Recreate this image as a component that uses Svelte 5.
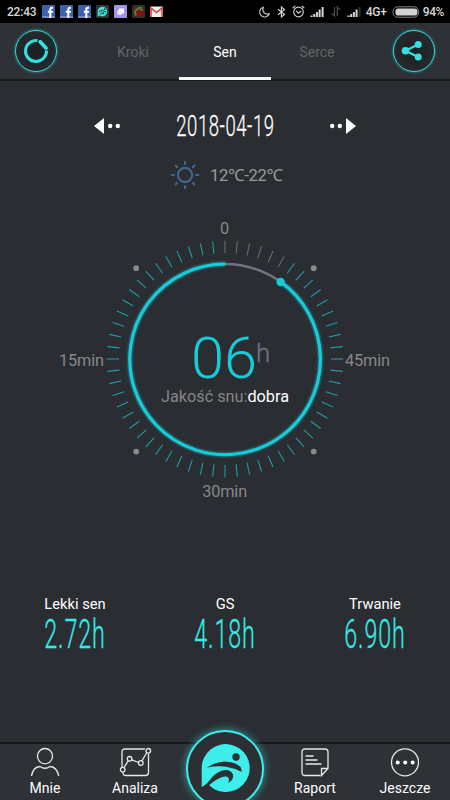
<script>
  const ticks = Array.from({ length: 60 }, (_, i) => i * 6);
  const stats = [
    { label: 'Lekki sen', value: '2.72h' },
    { label: 'GS', value: '4.18h' },
    { label: 'Trwanie', value: '6.90h' }
  ];
  const rays = [0, 45, 90, 135, 180, 225, 270, 315];
</script>

{#snippet fb()}
  <svg width="13" height="13" viewBox="0 0 13 13">
    <rect width="13" height="13" rx="1" fill="#3e5fa9" />
    <rect y="11" width="13" height="2" fill="#7189c4" />
    <path d="M11 2.8H9.8Q8.3 2.8 8.3 4.4V13M5.8 6.7H11" fill="none" stroke="#fff" stroke-width="2" />
  </svg>
{/snippet}

{#snippet signal(last)}
  <svg width="15" height="11" viewBox="0 0 15 11">
    <path d="M1.5 11V9.5M4.2 11V8M6.9 11V6M9.6 11V3.5" stroke="#d5d5d5" stroke-width="2" />
    <path d="M12.6 11V1" stroke={last} stroke-width="2" />
  </svg>
{/snippet}

<main>
  <div class="status">
    <span class="time">22:43</span>
    <div class="notifs">
      {@render fb()}
      {@render fb()}
      {@render fb()}
      <svg width="13" height="13" viewBox="0 0 13 13">
        <rect width="13" height="13" rx="1.5" fill="#343638" />
        <path d="M1.7 11.5V6.5A4.8 4.8 0 1 1 4.3 10.8Z" fill="#3fe3dc" />
        <path d="M3 6.5Q6 4 10.3 7M3.5 10Q5 7.5 8 7.8L7.3 9.2" stroke="#263436" fill="none" />
        <circle cx="8.7" cy="4.2" r=".9" fill="#263436" />
      </svg>
      <svg width="13" height="13" viewBox="0 0 13 13">
        <rect width="13" height="13" rx="1" fill="#a493e6" />
        <rect x="5" y="3.5" width="5" height="5" fill="#fff" />
        <rect x="3.3" y="5.3" width="4.5" height="4.5" fill="#eee9ff" />
      </svg>
      <svg width="13" height="13" viewBox="0 0 13 13">
        <rect width="13" height="13" rx="1.5" fill="#2a342b" />
        <circle cx="6.5" cy="6.5" r="5.3" fill="#8d1018" />
        <path d="M4.2 10.5Q1.8 7 4.8 4.4T10 2.8" fill="none" stroke="#2f9a42" stroke-width="1.7" />
        <path d="M8 4.5L11 5" stroke="#2f9a42" stroke-width="1.4" />
      </svg>
      <svg width="13" height="13" viewBox="0 0 13 13">
        <rect y="1.5" width="13" height="10.5" rx="1" fill="#f1eeee" />
        <path d="M1 12V3L6.5 7.5L12 3V12" fill="none" stroke="#d9463d" stroke-width="1.6" />
      </svg>
    </div>
    <div class="sys">
      <svg class="moon" width="11" height="12" viewBox="0 0 11 12">
        <path d="M4.3 1.2A5 5 0 1 0 10.3 7.8A4.8 4.8 0 0 1 4.3 1.2Z" fill="none" stroke="#ccc" stroke-width="1.1" />
      </svg>
      <svg class="bt" width="9" height="12" viewBox="0 0 9 12">
        <path d="M1 3.2L7.5 8.5L4.4 11V1L7.5 3.5L1 8.8" fill="none" stroke="#ccc" stroke-width="1.2" />
      </svg>
      <svg class="alarm" width="13" height="13" viewBox="0 0 13 13">
        <circle cx="6.5" cy="7" r="4.8" fill="none" stroke="#ccc" stroke-width="1.2" />
        <path d="M4.2 6L6.5 8.2L9 6M.7 3.2L3.2 1M12.3 3.2L9.8 1" fill="none" stroke="#ccc" stroke-width="1.2" />
      </svg>
      <span class="sig1">{@render signal('#d5d5d5')}</span>
      <svg class="data" width="10" height="11" viewBox="0 0 10 11">
        <path d="M1 7.5L3.5 10V1M6.3 10V1L9 3.7" fill="none" stroke="#4a4a4a" stroke-width="1.3" />
      </svg>
      <span class="sig2">{@render signal('#333')}</span>
      <span class="net">4G+</span>
      <svg class="battery" width="28" height="12" viewBox="0 0 28 12">
        <rect x="1" y=".8" width="25.5" height="10.4" rx="4.5" fill="none" stroke="#888" />
        <rect x="3.4" y="2.5" width="22" height="7" rx="2.8" fill="#d2d2d2" />
      </svg>
      <span class="pct">94%</span>
    </div>
  </div>

  <header>
    <div class="round">
      <svg width="42" height="42" viewBox="0 0 42 42">
        <path d="M22.4 10.6A10.5 10.5 0 1 0 31.5 20.5" fill="none" stroke="#32e1df" stroke-width="3" />
        <path d="M25.2 11.8L31 18" stroke="#32e1df" stroke-width="3.8" stroke-linecap="round" />
      </svg>
    </div>
    <nav>
      <span>Kroki</span>
      <span class="active">Sen</span>
      <span>Serce</span>
    </nav>
    <div class="round">
      <svg width="42" height="42" viewBox="0 0 42 42">
        <path d="M25.2 14.5L12.4 20.8L25.2 27" fill="none" stroke="#32e1df" stroke-width="2.2" />
        <g fill="#32e1df">
          <circle cx="12.5" cy="20.7" r="3.8" />
          <circle cx="25.2" cy="14.5" r="3.5" />
          <circle cx="25.2" cy="27" r="3.5" />
        </g>
      </svg>
    </div>
  </header>

  <section class="date">
    <svg width="26" height="18" viewBox="0 0 26 18" fill="#fff">
      <path d="M0 9L10 1V17Z" /><circle cx="16.2" cy="9" r="2.2" /><circle cx="23.8" cy="9" r="2.2" />
    </svg>
    <svg class="digits" width="100" height="28" viewBox="0 0 100 28">
      <text transform="translate(50.4 24.3) scale(.617 1)" font-size="30" letter-spacing=".9" text-anchor="middle" fill="#fff" stroke="#fff">2018-04-19</text>
    </svg>
    <svg width="26" height="18" viewBox="0 0 26 18" fill="#fff">
      <path d="M26 9L16 1V17Z" /><circle cx="9.8" cy="9" r="2.2" /><circle cx="2.2" cy="9" r="2.2" />
    </svg>
  </section>

  <section class="weather">
    <svg width="30" height="30" viewBox="-15 -15 30 30" fill="none" stroke="#40658f" stroke-width="2.1" stroke-linecap="round">
      <circle r="7.1" />
      {#each rays as a}
        <path d="M0 -11V-13.3" transform="rotate({a})" />
      {/each}
    </svg>
    <span>12℃-22℃</span>
  </section>

  <section class="dial">
    <svg width="350" height="290" viewBox="50 215 350 290">
      <g transform="translate(225 359)">
        {#each ticks as a}
          <path d="M0 -106V-118.3" transform="rotate({a})" stroke={a < 36 ? '#686c70' : '#209ca6'} stroke-width="1.1" />
        {/each}
      </g>
      <circle cx="225" cy="359.3" r="95.3" fill="none" stroke="#70767e" stroke-width="2.4" />
      <path class="arc" d="M280.6 281.8A95.3 95.3 0 1 1 225 264" fill="none" stroke="#18cbd9" stroke-width="3" />
      <circle cx="280.6" cy="282" r="4.2" fill="#18cbd9" />
      <g fill="#8b8b8c">
        <circle cx="136.2" cy="268.2" r="2.9" />
        <circle cx="313.7" cy="268.2" r="2.9" />
        <circle cx="136.2" cy="451.6" r="2.9" />
        <circle cx="313.7" cy="451.6" r="2.9" />
      </g>
      <g fill="#878889" font-size="16.3" text-anchor="middle">
        <text x="224.5" y="234">0</text>
        <text x="81.5" y="366" textLength="45">15min</text>
        <text x="367.5" y="366" textLength="45">45min</text>
        <text x="224.7" y="497" textLength="45">30min</text>
      </g>
      <text class="hours" x="191" y="377.5" font-size="57" textLength="66" lengthAdjust="spacingAndGlyphs" fill="#18cbd9">06</text>
      <text x="256" y="362" font-size="26" font-weight="300" fill="#6f7479" stroke="#6f7479" stroke-width=".4">h</text>
      <text x="161" y="401.5" font-size="16.3" textLength="128" fill="#858687">Jakość snu:<tspan fill="#fff">dobra</tspan></text>
    </svg>
  </section>

  <section class="stats">
    {#each stats as s}
      <div class="stat">
        <span>{s.label}</span>
        <svg class="digits" width="76" height="38" viewBox="0 0 76 38">
          <text transform="translate(38 33.3) scale(.575 1)" font-size="40.5" letter-spacing="1.5" text-anchor="middle" fill="#38ebe6" stroke="#38ebe6">{s.value}</text>
        </svg>
      </div>
    {/each}
  </section>

  <footer>
    <div class="item">
      <svg width="30" height="30" viewBox="0 0 30 30">
        <ellipse cx="15" cy="9.2" rx="7.5" ry="7.7" />
        <path d="M1.5 29Q3 20 10 19.5Q15 23 20 19.5Q27 20 28.7 29" />
      </svg>
      <span>Mnie</span>
    </div>
    <div class="item">
      <svg width="32" height="30" viewBox="0 0 32 30">
        <path d="M26 2H6Q3 2 3 5V20M4 25.5Q3.8 28.5 7 28.5H26.5Q29.5 28.5 29.5 25.5V7M4.8 20.8L9.3 13.8M12.7 12.8L19.5 15.5M22.7 14.2L27.6 6" />
        <circle cx="3.7" cy="22.7" r="2.3" /><circle cx="10.6" cy="11.8" r="2.3" />
        <circle cx="21.8" cy="16" r="2.3" /><circle cx="29.3" cy="3.8" r="2.3" />
      </svg>
      <span>Analiza</span>
    </div>
    <div class="item center">
      <div class="hub">
        <svg width="78" height="78" viewBox="0 0 78 78">
          <path d="M15.7 57V37.5A24 24 0 1 1 28.8 59.5Q25.5 57.8 22.8 54.5L15.7 57Z" fill="#3eeeea" />
          <circle cx="50" cy="27" r="3.7" fill="#2c2f33" />
          <path d="M20.5 37.8Q30 31.6 39 31.5Q49 31.5 55 37.5L55.8 42Q49 38.3 40 36.8Q31 35.5 20.5 37.8Z" fill="#2c2f33" />
          <path d="M15.7 57.5Q22 53.5 25.5 48Q32 40.3 40 40Q47 40.5 47.2 46.5Q46.5 51 41.8 53Q43.5 50.5 42.7 48Q40.5 45.5 35.5 47.3Q29.5 49.5 23 55L18 60Z" fill="#2c2f33" />
        </svg>
      </div>
    </div>
    <div class="item">
      <svg width="30" height="30" viewBox="0 0 30 30">
        <path d="M20.5 28.5H5Q2 28.5 2 25.5V5Q2 2 5 2H25Q28 2 28 5V21.5L21.5 28.5V21.5H28M5.5 9H13.5M5.5 13H17.5M5.5 17H21.5" />
      </svg>
      <span>Raport</span>
    </div>
    <div class="item">
      <svg width="30" height="30" viewBox="0 0 30 30">
        <circle cx="15" cy="15.3" r="13.5" />
        <g fill="#fff" stroke="none"><circle cx="7.7" cy="15.4" r="2" /><circle cx="15.2" cy="15.4" r="2" /><circle cx="22.7" cy="15.4" r="2" /></g>
      </svg>
      <span>Jeszcze</span>
    </div>
  </footer>
</main>

<style>
  :global(body) { margin: 0; background: #2a2d32; }
  main {
    width: 450px; height: 800px; overflow: hidden;
    display: flex; flex-direction: column;
    background: #2a2d32; color: #fff;
    font-family: Roboto, "Noto Sans", sans-serif;
  }
  svg { display: block; flex: none; overflow: visible; }
  .status {
    height: 23px; flex: none; background: #000; color: #d8d8d8;
    display: flex; align-items: center; justify-content: space-between;
    padding: 0 6px 0 7px; font-size: 12px; font-weight: 500; box-sizing: border-box;
  }
  .time { width: 35px; font-size: 12px; letter-spacing: -.2px; }
  .notifs { display: flex; gap: 5px; margin-right: auto; }
  .sys { display: flex; align-items: center; }
  .bt { margin-left: 7px; }
  .alarm { margin-left: 6px; }
  .sig1 { margin-left: 5px; }
  .data { margin-left: 6px; }
  .sig2 { margin-left: 6px; }
  .net { margin-left: 4px; letter-spacing: -.2px; }
  .battery { margin-left: 5px; }
  .pct { margin-left: 3px; letter-spacing: -.4px; }
  header {
    height: 58px; flex: none; box-sizing: border-box;
    display: flex; justify-content: space-between; padding: 0 15px;
    background: #2e3136; border-bottom: 2px solid #17191b;
  }
  .round {
    width: 42px; height: 42px; box-sizing: border-box; margin-top: 7px;
    display: flex; align-items: center; justify-content: center;
    border: 1.5px solid #2bdfe0; border-radius: 50%;
    background: radial-gradient(#1c1e21, #2b2e32);
    box-shadow: 0 0 3px #2bdfe0aa;
  }
  nav { display: flex; height: 57px; font-size: 14px; color: #626569; }
  nav span { width: 92px; height: 57px; line-height: 58px; text-align: center; box-sizing: border-box; }
  nav .active { color: #fff; border-bottom: 3px solid #f5f5f5; }
  .date { display: flex; align-items: center; justify-content: space-between; margin: 31px 94px 0; height: 28px; }
  .digits { font-weight: 300; stroke-width: .3px; }
  .weather {
    display: flex; align-items: center; gap: 10px; height: 30px;
    margin: 20px 0 0 170px; color: #9a9b9c; font-size: 16.6px; line-height: 20px; letter-spacing: -.3px;
  }
  .weather span { padding-top: 1px; }
  .dial { display: flex; justify-content: center; margin-top: 25px; }
  .arc { filter: drop-shadow(0 0 1.5px #16bbc8); }
  .hours { font-weight: 300; }
  .stats { display: flex; margin-top: 90px; font-size: 14.7px; }
  .stat { width: 150px; display: flex; flex-direction: column; align-items: center; line-height: 18px; }
  .stat svg { margin-top: 2px; }
  footer {
    margin-top: auto; height: 58px; box-sizing: border-box; flex: none;
    display: flex; background: #2e3136; border-top: 2px solid #15171a;
  }
  .item {
    width: 90px; display: flex; flex-direction: column; align-items: center;
    padding-top: 3px; box-sizing: border-box; font-size: 14px; line-height: 16px;
  }
  .item svg { fill: none; stroke: #e8e8e8; stroke-width: 1.3; }
  .item span { margin-top: 3px; }
  .hub {
    width: 78px; height: 78px; margin-top: -17px; flex: none; box-sizing: border-box;
    display: flex; align-items: center; justify-content: center;
    border: 2px solid #3eeeea; border-radius: 50%; background: #2c2f33;
    box-shadow: 0 0 8px #2fc7c7cc;
  }
  .item .hub svg { stroke: none; }
</style>
